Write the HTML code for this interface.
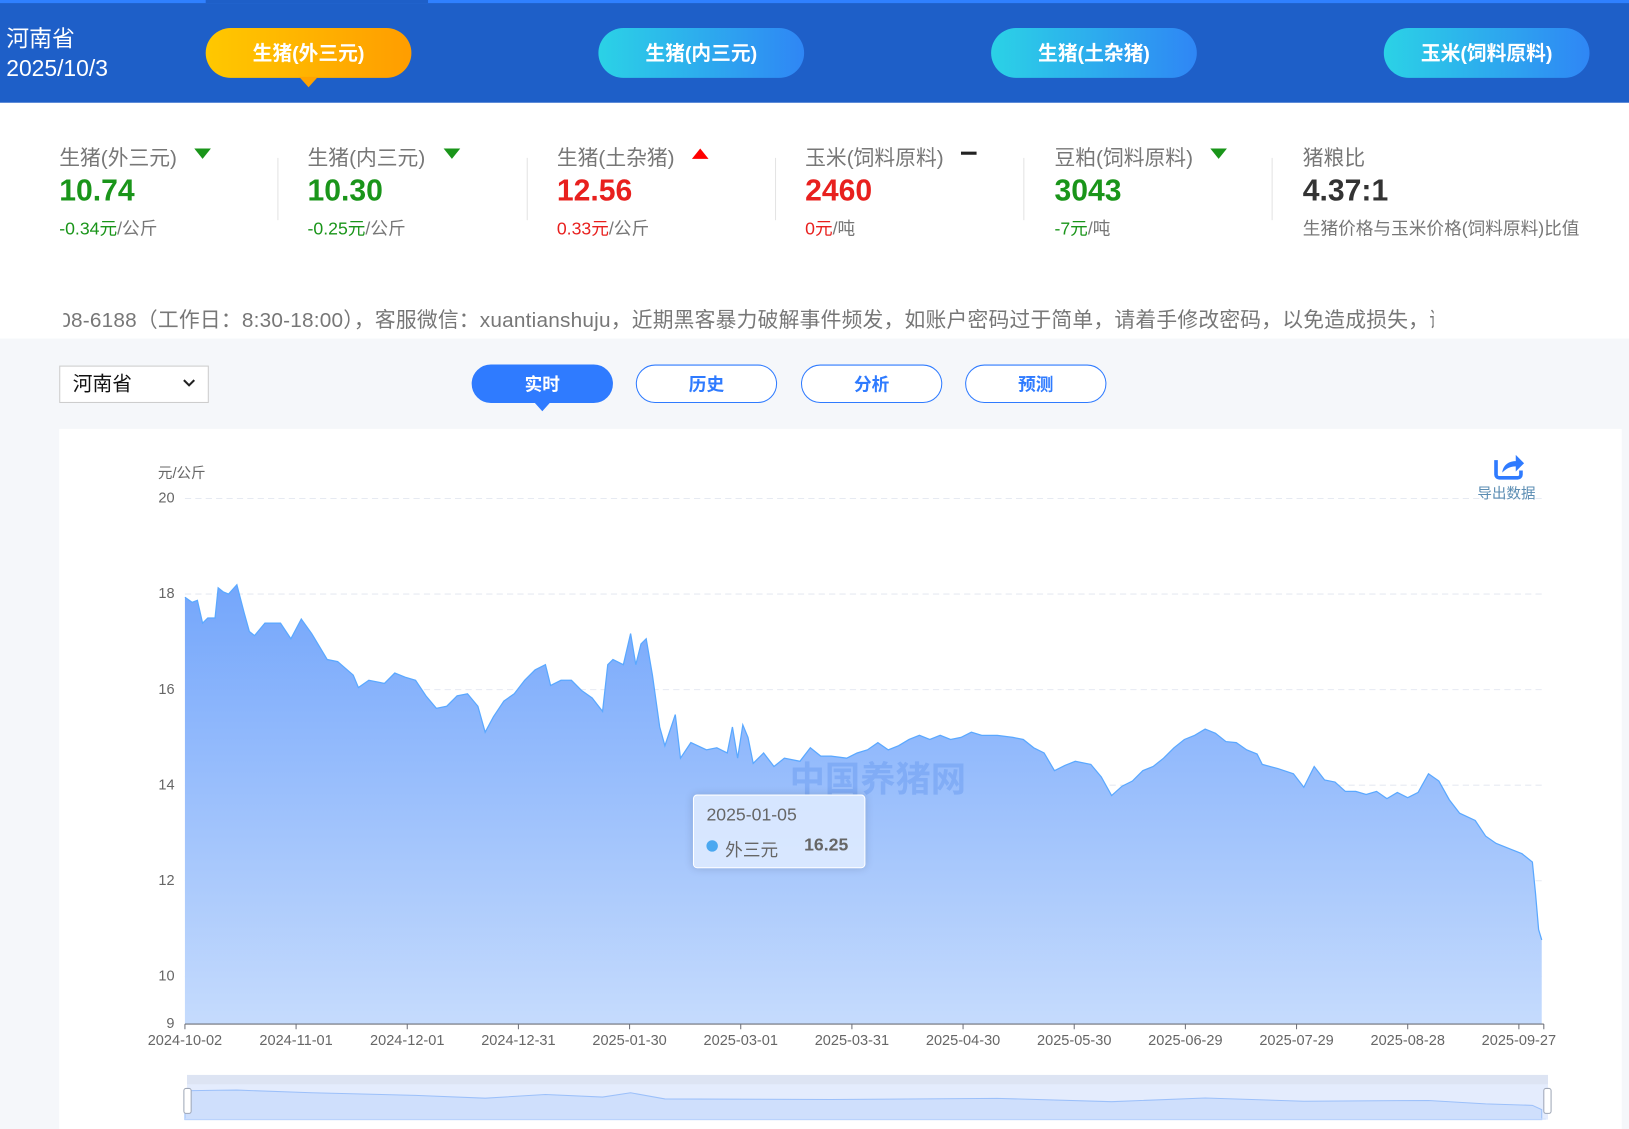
<!DOCTYPE html>
<html><head><meta charset="utf-8"><style>
*{margin:0;padding:0;box-sizing:border-box}
html,body{width:1629px;height:1129px;overflow:hidden;background:#f5f7fa}
#w{position:absolute;left:0;top:0;width:1568px;height:1087px;transform:scale(1.0389,1.0386);transform-origin:0 0;font-family:"Liberation Sans","Noto Sans CJK SC",sans-serif}
.a{position:absolute;white-space:nowrap}
.hd{left:0;top:0;width:1568px;height:99px;background:#1e5fc8}
.btn{height:48px;width:198px;top:27px;border-radius:24px;color:#fff;font-weight:bold;font-size:19px;line-height:52px;text-align:center;background:linear-gradient(90deg,#2bd2e6,#2f86f5)}
.lab{top:136px;font-size:20px;color:#777}
.val{top:168px;font-size:29px;font-weight:bold}
.sub{top:206px;font-size:17px;color:#777}
.g{color:#1a951a}.r{color:#e8201e}
.dv{top:152px;width:1px;height:60px;background:#e3e3e3}
.tab{top:351px;height:37px;width:136px;border-radius:19px;border:1px solid #2f7bff;background:#fff;color:#2f7bff;font-weight:bold;font-size:17px;line-height:37px;text-align:center}
.yl{font-size:14px;color:#666;width:40px;text-align:right;left:128px}
.xl{font-size:14px;color:#666;top:993px;width:100px;text-align:center}
</style></head><body><div id="w">
<div class="a hd"></div>
<div class="a" style="left:0;top:0;width:1568px;height:3px;background:#2f80ff"></div>
<div class="a" style="left:198px;top:0;width:214px;height:3px;background:#1e5fc8"></div>
<div class="a" style="left:6px;top:24px;color:#fff;font-size:22px;line-height:28px">河南省<br>2025/10/3</div>
<div class="a btn" style="left:198px;background:linear-gradient(90deg,#ffc800,#ff9d00)">生猪(外三元)</div>
<div class="a" style="left:288px;top:74px;width:0;height:0;border-left:9px solid transparent;border-right:9px solid transparent;border-top:10px solid #ffa300"></div>
<div class="a btn" style="left:576px">生猪(内三元)</div>
<div class="a btn" style="left:954px">生猪(土杂猪)</div>
<div class="a btn" style="left:1332px">玉米(饲料原料)</div>

<div class="a" style="left:0;top:99px;width:1568px;height:227px;background:#fff"></div>
<div class="a lab" style="left:57px">生猪(外三元)</div><div class="a" style="left:187px;top:143px;border-left:8px solid transparent;border-right:8px solid transparent;border-top:10px solid #1a951a"></div>
<div class="a val g" style="left:57px">10.74</div><div class="a sub" style="left:57px"><span class="g">-0.34元</span>/公斤</div>
<div class="a dv" style="left:267px"></div>
<div class="a lab" style="left:296px">生猪(内三元)</div><div class="a" style="left:427px;top:143px;border-left:8px solid transparent;border-right:8px solid transparent;border-top:10px solid #1a951a"></div>
<div class="a val g" style="left:296px">10.30</div><div class="a sub" style="left:296px"><span class="g">-0.25元</span>/公斤</div>
<div class="a dv" style="left:507px"></div>
<div class="a lab" style="left:536px">生猪(土杂猪)</div><div class="a" style="left:666px;top:143px;border-left:8px solid transparent;border-right:8px solid transparent;border-bottom:10px solid #f00"></div>
<div class="a val r" style="left:536px">12.56</div><div class="a sub" style="left:536px"><span class="r">0.33元</span>/公斤</div>
<div class="a dv" style="left:746px"></div>
<div class="a lab" style="left:775px">玉米(饲料原料)</div><div class="a" style="left:925px;top:146px;width:15px;height:3px;background:#222"></div>
<div class="a val r" style="left:775px">2460</div><div class="a sub" style="left:775px"><span class="r">0元</span>/吨</div>
<div class="a dv" style="left:985px"></div>
<div class="a lab" style="left:1015px">豆粕(饲料原料)</div><div class="a" style="left:1165px;top:143px;border-left:8px solid transparent;border-right:8px solid transparent;border-top:10px solid #1a951a"></div>
<div class="a val g" style="left:1015px">3043</div><div class="a sub" style="left:1015px"><span class="g">-7元</span>/吨</div>
<div class="a dv" style="left:1224px"></div>
<div class="a lab" style="left:1254px">猪粮比</div>
<div class="a val" style="left:1254px;color:#333">4.37:1</div><div class="a sub" style="left:1254px">生猪价格与玉米价格(饲料原料)比值</div>
<div class="a" style="left:57px;top:292px;width:1323px;overflow:hidden;font-size:20px;color:#777;letter-spacing:0.2px">08-6188（工作日：8:30-18:00），客服微信：xuantianshuju，近期黑客暴力破解事件频发，如账户密码过于简单，请着手修改密码，以免造成损失，谢谢合作</div>
<div class="a" style="left:57px;top:293px;width:4px;height:24px;background:#fff"></div>

<div class="a" style="left:57px;top:352px;width:144px;height:36px;background:#fff;border:1px solid #ccc;font-size:19px;line-height:36px;padding-left:12px;color:#111">河南省</div>
<svg class="a" style="left:175px;top:364px" width="14" height="10"><path d="M2 2L7 7L12 2" fill="none" stroke="#222" stroke-width="2"/></svg>
<div class="a tab" style="left:454px;background:#2f7bff;color:#fff">实时</div>
<div class="a" style="left:514px;top:387px;border-left:8px solid transparent;border-right:8px solid transparent;border-top:9px solid #2f7bff"></div>
<div class="a tab" style="left:612px">历史</div>
<div class="a tab" style="left:771px">分析</div>
<div class="a tab" style="left:929px">预测</div>

<div class="a" style="left:57px;top:413px;width:1504px;height:674px;background:#fff"></div>
<div class="a" style="left:152px;top:445px;font-size:14px;color:#666">元/公斤</div>
<div class="a yl" style="top:471px">20</div><div class="a yl" style="top:563px">18</div><div class="a yl" style="top:655px">16</div><div class="a yl" style="top:747px">14</div><div class="a yl" style="top:839px">12</div><div class="a yl" style="top:931px">10</div><div class="a yl" style="top:977px">9</div>
<svg class="a" style="left:0;top:0" width="1568" height="1087">
<defs><linearGradient id="gf" x1="0" y1="0" x2="0" y2="1"><stop offset="0" stop-color="#74a6fb"/><stop offset="1" stop-color="#c5dbfd"/></linearGradient></defs>
<g stroke="#e6eaf2" stroke-dasharray="6,4" stroke-width="1">
<line x1="178" y1="480" x2="1486" y2="480"/><line x1="178" y1="572" x2="1486" y2="572"/><line x1="178" y1="664" x2="1486" y2="664"/><line x1="178" y1="756" x2="1486" y2="756"/><line x1="178" y1="848" x2="1486" y2="848"/><line x1="178" y1="940" x2="1486" y2="940"/></g>
<path id="d" d="M178,575 L185,580 190,578 195,600 200,595 207,595 210,566 215,570 220,572 228,563 235,590 240,608 245,612 255,600 270,600 280,615 290,596 300,610 315,635 325,637 340,650 345,662 355,655 370,658 380,648 390,652 400,655 410,670 420,682 430,680 440,670 450,668 460,680 467,705 475,690 485,675 495,668 505,655 515,645 525,640 530,660 540,655 550,655 560,665 570,672 580,685 585,640 590,635 600,640 607,610 612,640 617,620 622,615 628,650 635,700 640,718 650,688 655,730 665,715 680,722 690,720 700,725 705,700 710,730 715,698 720,710 725,735 735,725 745,738 755,730 770,733 780,720 790,728 800,728 815,730 825,725 835,722 845,715 855,722 865,718 875,712 885,708 895,712 905,708 915,712 925,710 935,705 945,708 960,708 975,710 985,712 995,720 1005,725 1015,742 1025,737 1035,733 1050,736 1060,748 1070,766 1080,757 1090,752 1100,742 1110,738 1120,730 1130,720 1140,712 1150,708 1160,702 1170,706 1180,714 1190,715 1200,722 1210,726 1215,736 1230,740 1245,745 1255,758 1265,738 1275,751 1285,753 1295,762 1305,762 1315,765 1325,762 1335,769 1345,763 1355,768 1365,763 1375,745 1385,752 1395,770 1405,783 1420,790 1430,805 1440,812 1455,818 1465,822 1475,830 1478,860 1481,895 1484,905" fill="none"/>
<path d="M178,575 L185,580 190,578 195,600 200,595 207,595 210,566 215,570 220,572 228,563 235,590 240,608 245,612 255,600 270,600 280,615 290,596 300,610 315,635 325,637 340,650 345,662 355,655 370,658 380,648 390,652 400,655 410,670 420,682 430,680 440,670 450,668 460,680 467,705 475,690 485,675 495,668 505,655 515,645 525,640 530,660 540,655 550,655 560,665 570,672 580,685 585,640 590,635 600,640 607,610 612,640 617,620 622,615 628,650 635,700 640,718 650,688 655,730 665,715 680,722 690,720 700,725 705,700 710,730 715,698 720,710 725,735 735,725 745,738 755,730 770,733 780,720 790,728 800,728 815,730 825,725 835,722 845,715 855,722 865,718 875,712 885,708 895,712 905,708 915,712 925,710 935,705 945,708 960,708 975,710 985,712 995,720 1005,725 1015,742 1025,737 1035,733 1050,736 1060,748 1070,766 1080,757 1090,752 1100,742 1110,738 1120,730 1130,720 1140,712 1150,708 1160,702 1170,706 1180,714 1190,715 1200,722 1210,726 1215,736 1230,740 1245,745 1255,758 1265,738 1275,751 1285,753 1295,762 1305,762 1315,765 1325,762 1335,769 1345,763 1355,768 1365,763 1375,745 1385,752 1395,770 1405,783 1420,790 1430,805 1440,812 1455,818 1465,822 1475,830 1478,860 1481,895 1484,905 L1484,986 L178,986 Z" fill="url(#gf)"/>
<use href="#d" stroke="#5aa8ff" stroke-width="1.2"/>
<line x1="178" y1="986" x2="1486" y2="986" stroke="#6e7079"/>
<g stroke="#6e7079"><line x1="178" y1="986" x2="178" y2="991"/><line x1="285" y1="986" x2="285" y2="991"/><line x1="392" y1="986" x2="392" y2="991"/><line x1="499" y1="986" x2="499" y2="991"/><line x1="606" y1="986" x2="606" y2="991"/><line x1="713" y1="986" x2="713" y2="991"/><line x1="820" y1="986" x2="820" y2="991"/><line x1="927" y1="986" x2="927" y2="991"/><line x1="1034" y1="986" x2="1034" y2="991"/><line x1="1141" y1="986" x2="1141" y2="991"/><line x1="1248" y1="986" x2="1248" y2="991"/><line x1="1355" y1="986" x2="1355" y2="991"/><line x1="1462" y1="986" x2="1462" y2="991"/><line x1="1486" y1="986" x2="1486" y2="991"/></g>
<text x="845" y="762" font-size="34" font-weight="bold" fill="#6f9ff0" fill-opacity="0.55" text-anchor="middle" font-family="Liberation Sans,Noto Sans CJK SC,sans-serif">中国养猪网</text>
<rect x="180" y="1035" width="1310" height="43" fill="#e4ecfd"/>
<rect x="180" y="1035" width="1310" height="9" fill="#dde4f3"/>
<g transform="translate(0,1045) scale(1,0.055) translate(0,-480)"><path d="M178,575 L210,566 228,563 300,610 400,655 467,705 525,640 580,685 607,610 640,718 800,728 960,708 1070,766 1160,702 1255,758 1375,745 1430,805 1475,830 1484,905 L1484,1080 L178,1080 Z" fill="#cfdffc" stroke="#9cc0fa" vector-effect="non-scaling-stroke"/></g>
<rect x="178" y="1077" width="1310" height="1" fill="#cfdffc"/>
<rect x="177" y="1048" width="7" height="24" rx="2" fill="#fff" stroke="#a0a8b8"/>
<rect x="1486" y="1048" width="7" height="24" rx="2" fill="#fff" stroke="#a0a8b8"/>
<path d="M1440 443v14a3 3 0 0 0 3 3h18a3 3 0 0 0 3-3v-4" fill="none" stroke="#2f7bff" stroke-width="3.5"/>
<path d="M1446 455c1-8 7-11 13-11v-6l8 8l-8 8v-5c-5 0-9 2-13 6z" fill="#2f7bff"/>
</svg>
<div class="a" style="left:1422px;top:465px;font-size:14px;color:#5b8db3">导出数据</div>
<div class="a xl" style="left:128px">2024-10-02</div><div class="a xl" style="left:235px">2024-11-01</div><div class="a xl" style="left:342px">2024-12-01</div><div class="a xl" style="left:449px">2024-12-31</div><div class="a xl" style="left:556px">2025-01-30</div><div class="a xl" style="left:663px">2025-03-01</div><div class="a xl" style="left:770px">2025-03-31</div><div class="a xl" style="left:877px">2025-04-30</div><div class="a xl" style="left:984px">2025-05-30</div><div class="a xl" style="left:1091px">2025-06-29</div><div class="a xl" style="left:1198px">2025-07-29</div><div class="a xl" style="left:1305px">2025-08-28</div><div class="a xl" style="left:1412px">2025-09-27</div>
<div class="a" style="left:667px;top:765px;width:166px;height:71px;background:rgba(225,236,255,0.85);border:1px solid #fff;border-radius:4px;box-shadow:0 0 8px rgba(0,0,0,0.15)"></div>
<div class="a" style="left:680px;top:775px;font-size:17px;color:#666">2025-01-05</div>
<div class="a" style="left:680px;top:809px;width:11px;height:11px;border-radius:50%;background:#4aa8f0"></div>
<div class="a" style="left:698px;top:804px;font-size:17px;color:#666">外三元</div>
<div class="a" style="left:774px;top:804px;font-size:17px;color:#666;font-weight:bold">16.25</div>
</div></body></html>
